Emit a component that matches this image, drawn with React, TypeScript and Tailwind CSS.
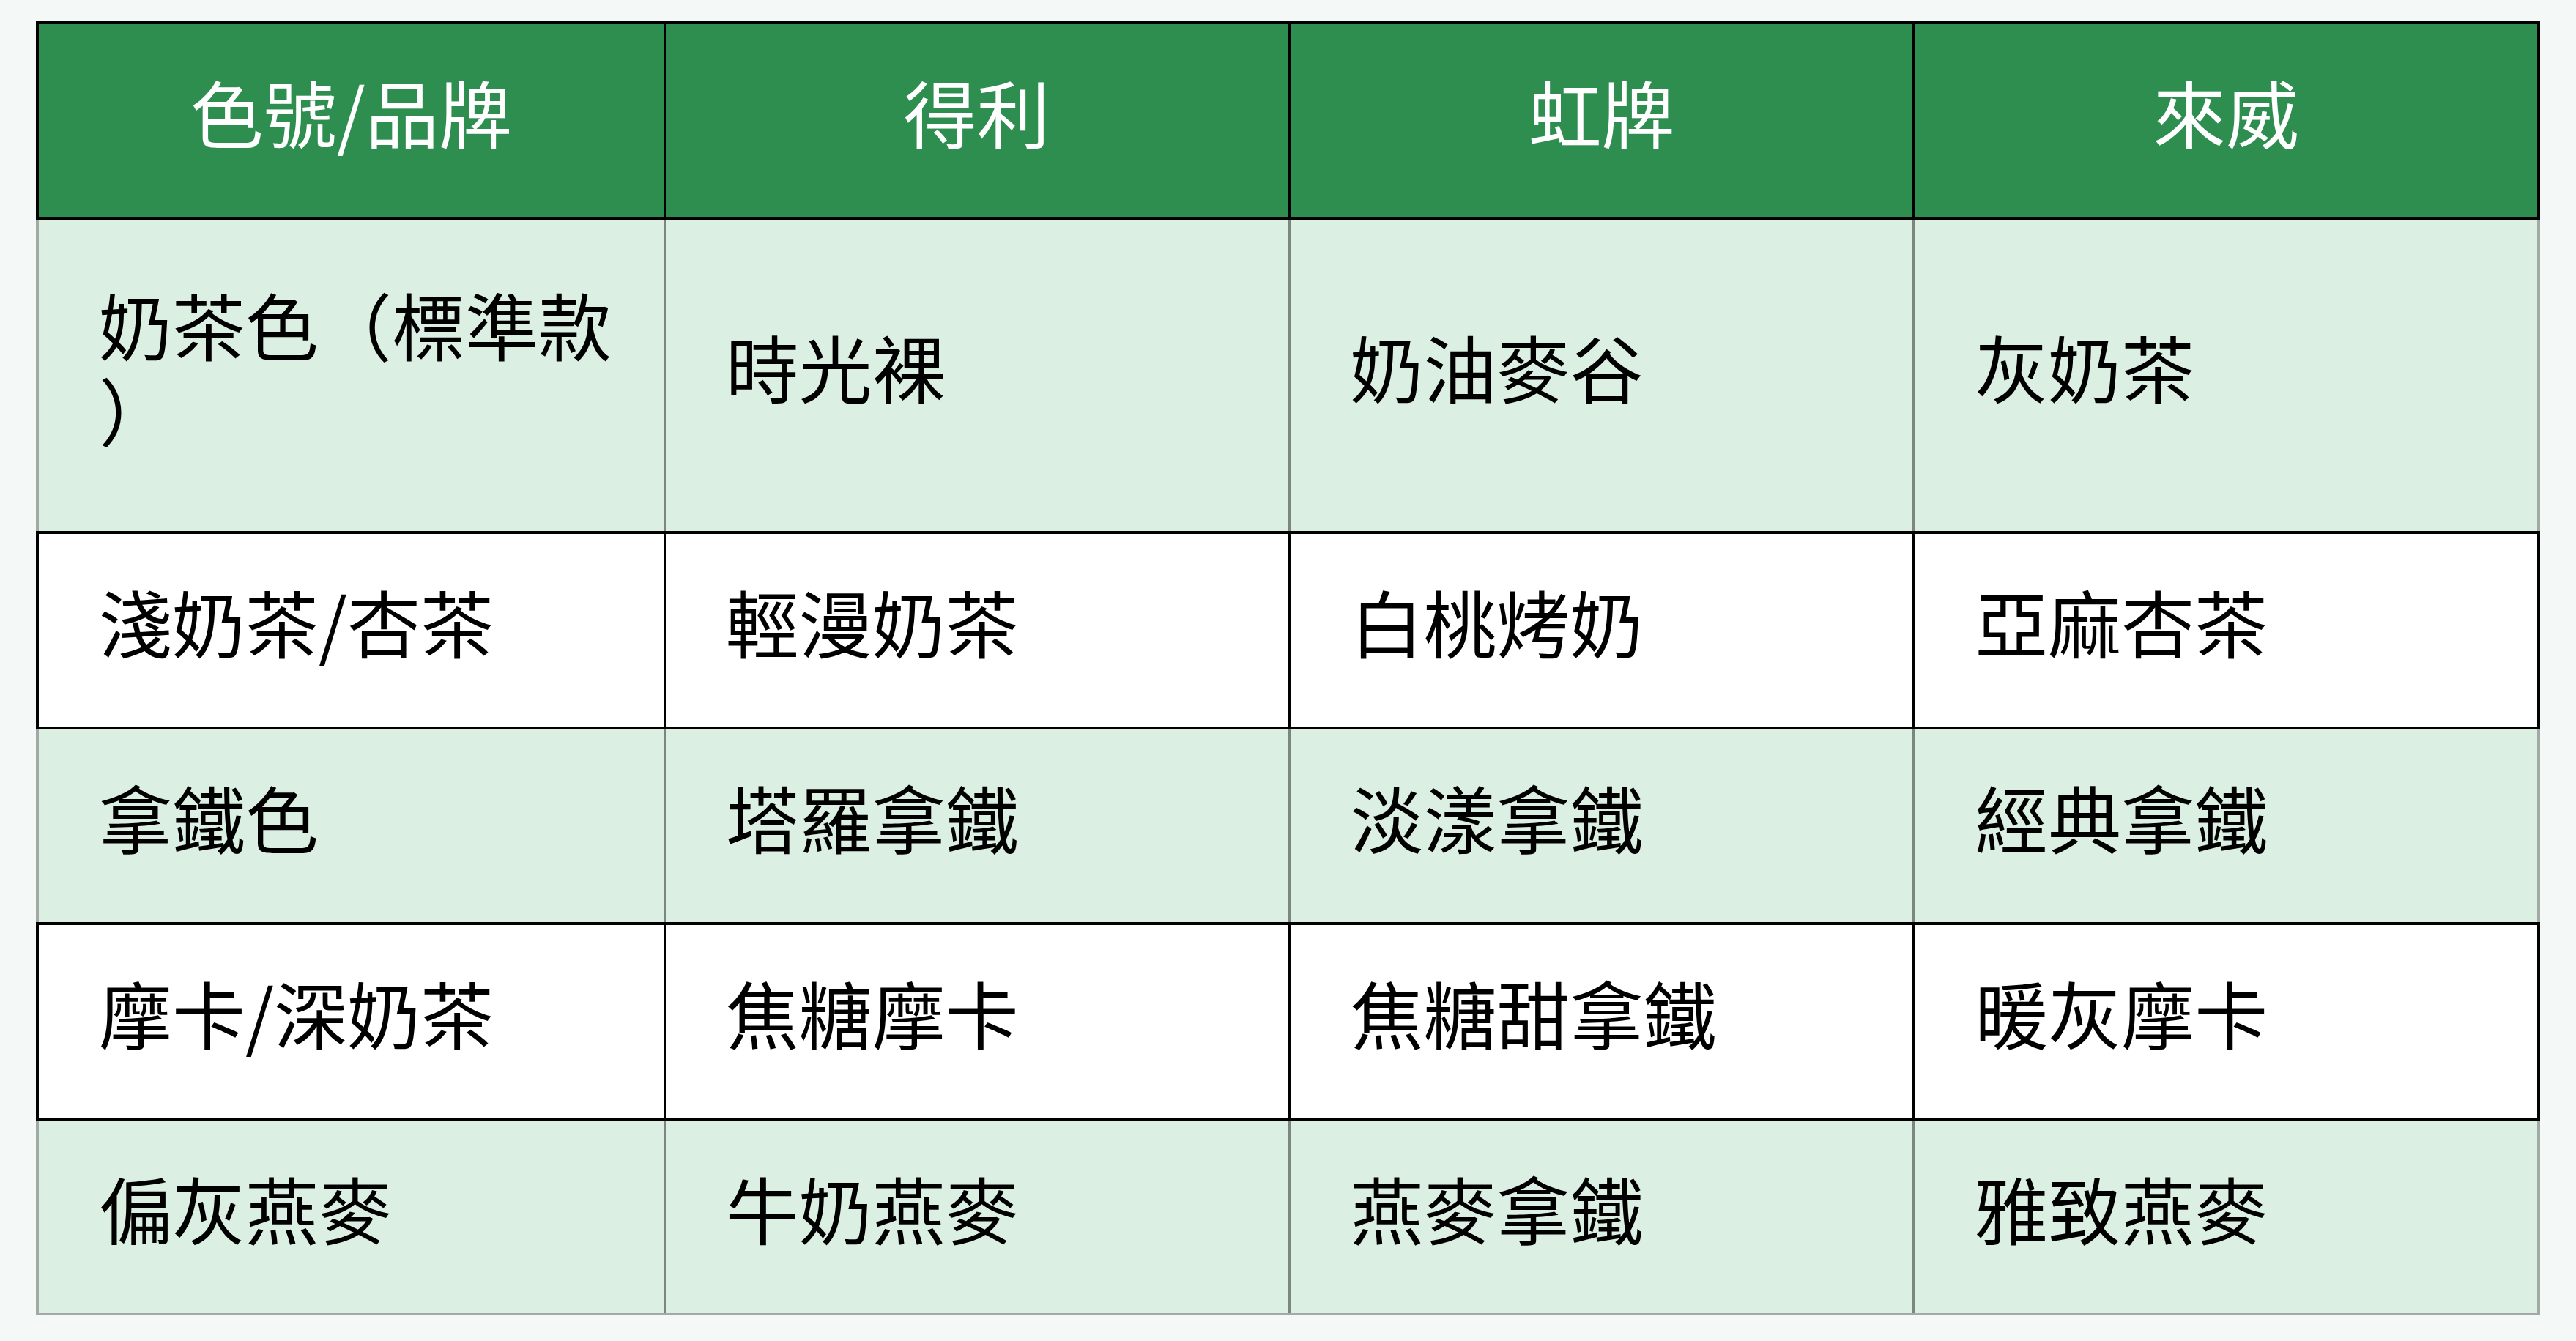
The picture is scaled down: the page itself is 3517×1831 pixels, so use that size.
import React from 'react';

type Row = { cells: string[]; tone: 'green' | 'white'; height: string };

const rows: Row[] = [
  { cells: ['奶茶色（標準款\n）', '時光裸', '奶油麥谷', '灰奶茶'], tone: 'green', height: 'h-[425px]' },
  { cells: ['淺奶茶/杏茶', '輕漫奶茶', '白桃烤奶', '亞麻杏茶'], tone: 'white', height: 'h-[271px]' },
  { cells: ['拿鐵色', '塔羅拿鐵', '淡漾拿鐵', '經典拿鐵'], tone: 'green', height: 'h-[263px]' },
  { cells: ['摩卡/深奶茶', '焦糖摩卡', '焦糖甜拿鐵', '暖灰摩卡'], tone: 'white', height: 'h-[271px]' },
  { cells: ['偏灰燕麥', '牛奶燕麥', '燕麥拿鐵', '雅致燕麥'], tone: 'green', height: 'h-[266px]' },
];

const headers = ['色號/品牌', '得利', '虹牌', '來威'];

const Cell: React.FC<{ text: string; divider: string; first: boolean }> = ({ text, divider, first }) => {
  const lines = text.split('\n');
  return (
    <div className={`flex items-center pb-[26px] pl-[82px] pr-[20px] ${first ? '' : `border-l-[3px] ${divider}`}`}>
      <div className="text-[100px] leading-[116px] text-black">
        {lines.map((line, i) => (
          <div key={i} className="whitespace-nowrap">
            {line}
          </div>
        ))}
      </div>
    </div>
  );
};

const App: React.FC = () => {
  return (
    <div
      className="min-h-screen w-full bg-[#f4f8f6] px-[49px] pt-[29px]"
      style={{ fontFamily: '"Noto Sans CJK TC", "Noto Sans", sans-serif' }}
    >
      <div className="w-full">
        {/* header */}
        <div className="grid h-[271px] grid-cols-4 border-4 border-black bg-[#2e8e4f]">
          {headers.map((h, i) => (
            <div
              key={h}
              className={`flex items-center justify-center pb-[26px] text-[100px] leading-[120px] text-white ${
                i > 0 ? 'border-l-[3px] border-black' : ''
              }`}
            >
              {h}
            </div>
          ))}
        </div>

        {rows.map((row, r) => {
          const isGreen = row.tone === 'green';
          const last = r === rows.length - 1;
          const rowCls = isGreen
            ? `bg-[#dbefe2] border-x-4 border-[#a3aaa6] ${last ? 'border-b-[3px]' : ''}`
            : 'bg-white border-4 border-black';
          const divider = isGreen ? 'border-[#7c8580]' : 'border-black';
          return (
            <div key={r} className={`grid grid-cols-4 ${row.height} ${rowCls}`}>
              {row.cells.map((c, i) => (
                <Cell key={i} text={c} divider={divider} first={i === 0} />
              ))}
            </div>
          );
        })}
      </div>
    </div>
  );
};

export default App;
